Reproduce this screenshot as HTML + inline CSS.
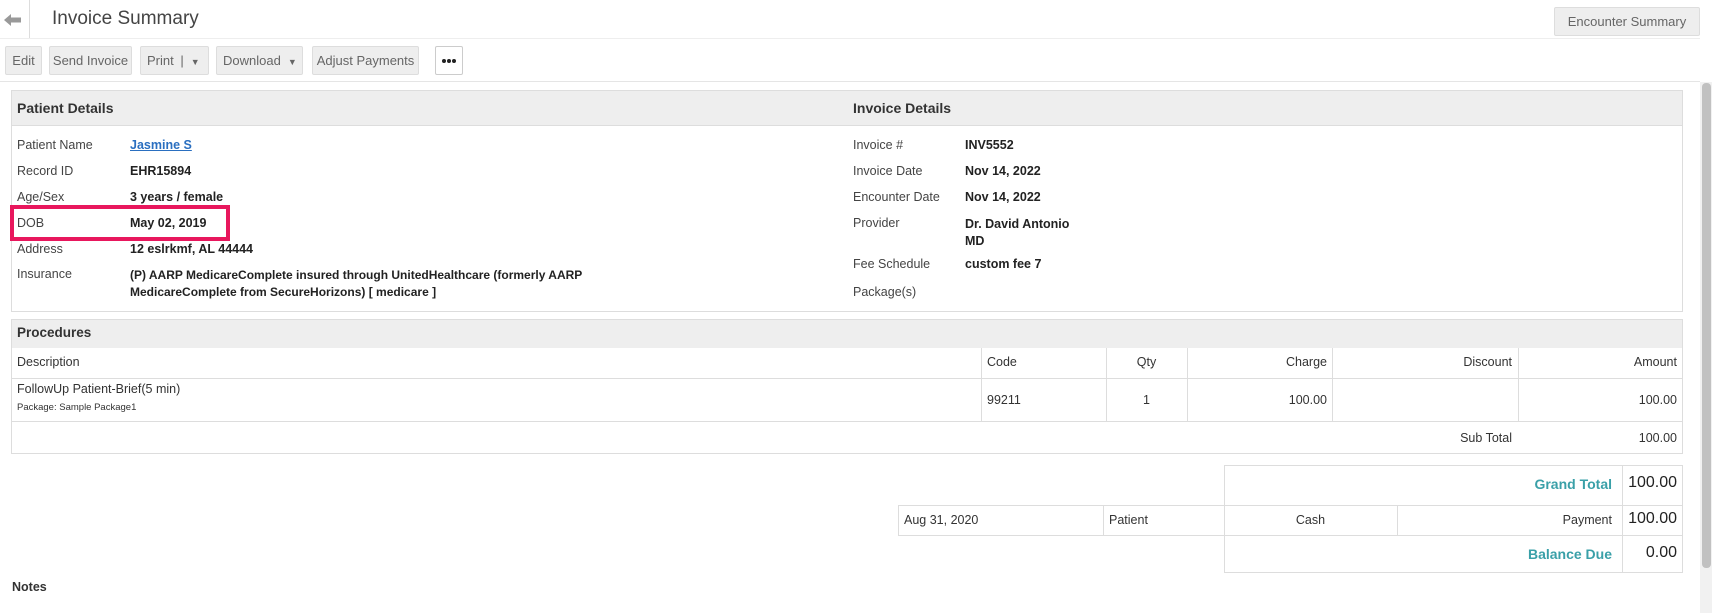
<!DOCTYPE html>
<html><head><meta charset="utf-8"><style>
*{box-sizing:border-box;margin:0;padding:0}
body{width:1712px;height:613px;overflow:hidden;background:#fff;font-family:"Liberation Sans",sans-serif;color:#333;font-size:12.5px;position:relative}
.a{position:absolute;white-space:nowrap}
.btn{position:absolute;top:46px;height:29px;background:#eee;border:1px solid #ddd;border-radius:2px;color:#666;font-size:13px;line-height:27px;text-align:center;white-space:nowrap;overflow:hidden}
.lbl{position:absolute;color:#444;font-size:12.5px;white-space:nowrap}
.val{position:absolute;color:#222;font-size:12.5px;font-weight:bold;white-space:nowrap}
.hl{position:absolute;background:#ddd}
.vl{position:absolute;background:#ddd;width:1px}
.dot{position:absolute;top:12px;width:4px;height:4px;border-radius:2px;background:#222}
</style></head><body>
<svg class="a" style="left:4px;top:13px" width="18" height="14" viewBox="0 0 18 14"><path d="M0 7 L7 1 L7 4.5 L17 4.5 L17 9.5 L7 9.5 L7 13 Z" fill="#999"/></svg>
<div class="a" style="left:29px;top:0;width:1px;height:38px;background:#ddd"></div>
<div class="a" style="left:52px;top:8px;font-size:19px;color:#444">Invoice Summary</div>
<div class="btn" style="left:1554px;top:7px;width:146px;height:29px;font-size:13px">Encounter Summary</div>
<div class="hl" style="left:0;top:38px;width:1700px;height:1px;background:#eee"></div>
<div class="btn" style="left:5px;width:37px">Edit</div>
<div class="btn" style="left:49px;width:83px">Send Invoice</div>
<div class="btn" style="left:140px;width:69px;text-align:left;padding-left:6px">Print <span style="margin-left:3px">|</span><span style="font-size:9px;margin-left:7px">▼</span></div>
<div class="btn" style="left:216px;width:87px;text-align:left;padding-left:6px">Download<span style="font-size:9px;margin-left:7px">▼</span></div>
<div class="btn" style="left:312px;width:107px">Adjust Payments</div>
<div class="btn" style="left:435px;width:28px;background:#fff;border-color:#ccc"><span class="dot" style="left:6px"></span><span class="dot" style="left:11px"></span><span class="dot" style="left:16px"></span></div>
<div class="hl" style="left:0;top:81px;width:1700px;height:1px;background:#e5e5e5"></div>
<div class="a" style="left:1700px;top:82px;width:12px;height:531px;background:#f1f1f1"></div>
<div class="a" style="left:1702px;top:83px;width:9px;height:485px;background:#c1c1c1;border-radius:4px"></div>
<div class="a" style="left:11px;top:90px;width:1672px;height:222px;border:1px solid #ddd"></div>
<div class="a" style="left:12px;top:91px;width:1670px;height:35px;background:#eee;border-bottom:1px solid #ddd"></div>
<div class="a" style="left:17px;top:100px;font-weight:bold;font-size:14px;color:#333">Patient Details</div>
<div class="a" style="left:853px;top:100px;font-weight:bold;font-size:14px;color:#333">Invoice Details</div>
<div class="lbl" style="left:17px;top:138px">Patient Name</div><div class="val" style="left:130px;top:138px;color:#2a6fc0;text-decoration:underline">Jasmine S</div>
<div class="lbl" style="left:17px;top:164px">Record ID</div><div class="val" style="left:130px;top:164px">EHR15894</div>
<div class="lbl" style="left:17px;top:190px">Age/Sex</div><div class="val" style="left:130px;top:190px">3 years / female</div>
<div class="lbl" style="left:17px;top:216px">DOB</div><div class="val" style="left:130px;top:216px">May 02, 2019</div>
<div class="lbl" style="left:17px;top:242px">Address</div><div class="val" style="left:130px;top:242px">12 eslrkmf, AL 44444</div>
<div class="lbl" style="left:17px;top:267px">Insurance</div><div class="val" style="left:130px;top:267px;line-height:17px;font-size:12px">(P) AARP MedicareComplete insured through UnitedHealthcare (formerly AARP<br>MedicareComplete from SecureHorizons) [ medicare ]</div>
<div class="a" style="left:10px;top:205px;width:220px;height:36px;border:4px solid #e8175d"></div>
<div class="lbl" style="left:853px;top:138px">Invoice #</div><div class="val" style="left:965px;top:138px">INV5552</div>
<div class="lbl" style="left:853px;top:164px">Invoice Date</div><div class="val" style="left:965px;top:164px">Nov 14, 2022</div>
<div class="lbl" style="left:853px;top:190px">Encounter Date</div><div class="val" style="left:965px;top:190px">Nov 14, 2022</div>
<div class="lbl" style="left:853px;top:216px">Provider</div><div class="val" style="left:965px;top:216px;line-height:17px">Dr. David Antonio<br>MD</div>
<div class="lbl" style="left:853px;top:257px">Fee Schedule</div><div class="val" style="left:965px;top:257px">custom fee 7</div>
<div class="lbl" style="left:853px;top:285px">Package(s)</div>
<div class="a" style="left:11px;top:319px;width:1672px;height:135px;border:1px solid #ddd"></div>
<div class="a" style="left:12px;top:320px;width:1670px;height:28px;background:#eee"></div>
<div class="a" style="left:17px;top:325px;font-size:13.5px;font-weight:bold;color:#333">Procedures</div>
<div class="hl" style="left:12px;top:378px;width:1670px;height:1px"></div>
<div class="hl" style="left:12px;top:421px;width:1670px;height:1px"></div>
<div class="vl" style="left:981px;top:348px;height:73px"></div>
<div class="vl" style="left:1106px;top:348px;height:73px"></div>
<div class="vl" style="left:1187px;top:348px;height:73px"></div>
<div class="vl" style="left:1332px;top:348px;height:73px"></div>
<div class="vl" style="left:1518px;top:348px;height:73px"></div>
<div class="a" style="left:17px;top:355px;color:#333">Description</div>
<div class="a" style="left:987px;top:355px;color:#333">Code</div>
<div class="a" style="left:1106px;top:355px;width:81px;text-align:center;color:#333">Qty</div>
<div class="a" style="left:1187px;top:355px;width:140px;text-align:right;color:#333">Charge</div>
<div class="a" style="left:1332px;top:355px;width:180px;text-align:right;color:#333">Discount</div>
<div class="a" style="left:1518px;top:355px;width:159px;text-align:right;color:#333">Amount</div>
<div class="a" style="left:17px;top:382px">FollowUp Patient-Brief(5 min)</div>
<div class="a" style="left:17px;top:402px;font-size:9.5px">Package: Sample Package1</div>
<div class="a" style="left:987px;top:393px">99211</div>
<div class="a" style="left:1106px;top:393px;width:81px;text-align:center">1</div>
<div class="a" style="left:1187px;top:393px;width:140px;text-align:right">100.00</div>
<div class="a" style="left:1518px;top:393px;width:159px;text-align:right">100.00</div>
<div class="a" style="left:1332px;top:431px;width:180px;text-align:right">Sub Total</div>
<div class="a" style="left:1518px;top:431px;width:159px;text-align:right">100.00</div>
<div class="a" style="left:1224px;top:465px;width:459px;height:108px;border:1px solid #ddd"></div>
<div class="a" style="left:898px;top:505px;width:785px;height:31px;border:1px solid #ddd"></div>
<div class="vl" style="left:1622px;top:465px;height:108px"></div>
<div class="vl" style="left:1103px;top:505px;height:31px"></div>
<div class="vl" style="left:1397px;top:505px;height:31px"></div>
<div class="a" style="left:1224px;top:476px;width:388px;text-align:right;color:#3aa0a8;font-weight:bold;font-size:14px">Grand Total</div>
<div class="a" style="left:1622px;top:474px;width:55px;text-align:right;font-size:16px;color:#222">100.00</div>
<div class="a" style="left:904px;top:513px">Aug 31, 2020</div>
<div class="a" style="left:1109px;top:513px">Patient</div>
<div class="a" style="left:1224px;top:513px;width:173px;text-align:center">Cash</div>
<div class="a" style="left:1397px;top:513px;width:215px;text-align:right">Payment</div>
<div class="a" style="left:1622px;top:510px;width:55px;text-align:right;font-size:16px;color:#222">100.00</div>
<div class="a" style="left:1224px;top:546px;width:388px;text-align:right;color:#3aa0a8;font-weight:bold;font-size:14px">Balance Due</div>
<div class="a" style="left:1622px;top:544px;width:55px;text-align:right;font-size:16px;color:#222">0.00</div>
<div class="a" style="left:12px;top:580px;font-weight:bold;color:#333">Notes</div>
</body></html>
